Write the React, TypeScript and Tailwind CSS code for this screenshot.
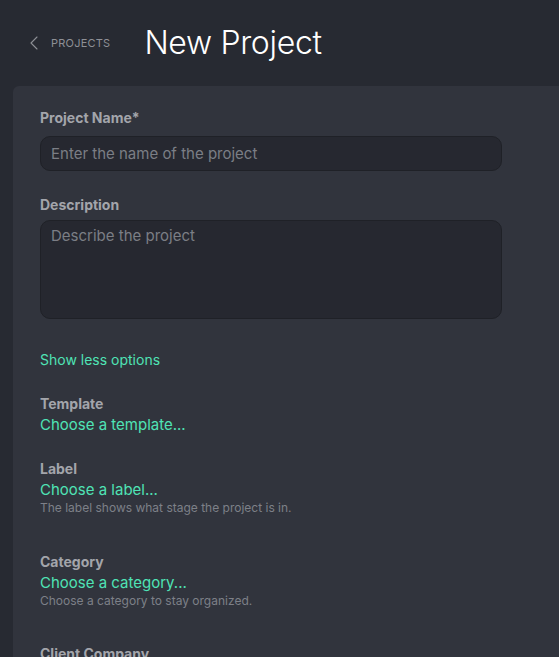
import { ChevronLeft } from "lucide-react";

function Field({
  label,
  action,
  hint,
}: {
  label: string;
  action: string;
  hint?: string;
}) {
  return (
    <div>
      <p className="text-[14px] font-bold leading-5 text-[#a3a5ab]">{label}</p>
      <p className="mt-[1px] text-[15px] leading-5 text-[#4fe3b5]">{action}</p>
      {hint && (
        <p className="text-[12px] leading-4 text-[#7d8088]">{hint}</p>
      )}
    </div>
  );
}

export default function App() {
  return (
    <div
      className="h-[657px] w-[559px] overflow-hidden bg-[#272a32]"
      style={{ fontFamily: "Inter, 'Noto Sans', sans-serif" }}
    >
      <header className="flex h-[86px] items-center">
        <a className="ml-[22px] flex items-center gap-[5px] text-[#8e9096]">
          <ChevronLeft size={24} strokeWidth={1.1} />
          <span className="text-[11px] tracking-[0.02em]">PROJECTS</span>
        </a>
        <h1 className="ml-[34px] text-[32px] font-light tracking-[-0.01em] text-white">
          New Project
        </h1>
      </header>

      <main className="ml-[13px] w-[560px] rounded-tl-[6px] bg-[#31343d] pl-[27px] pt-[22px] pb-10">
        <div className="w-[462px]">
          <label className="block text-[14px] font-bold leading-5 text-[#a3a5ab]">
            Project Name*
          </label>
          <input
            className="mt-[8px] h-[35px] w-full rounded-[10px] border border-[#1f2127] bg-[#262830] px-[10px] text-[15px] text-white outline-none placeholder:text-[#7b7e85]"
            placeholder="Enter the name of the project"
          />

          <label className="mt-[24px] block text-[14px] font-bold leading-5 text-[#a3a5ab]">
            Description
          </label>
          <textarea
            className="mt-[5px] block h-[99px] w-full resize-none rounded-[10px] border border-[#1f2127] bg-[#262830] px-[10px] py-[4px] text-[15px] text-white outline-none placeholder:text-[#7b7e85]"
            placeholder="Describe the project"
          />
        </div>

        <p className="mt-[31px] text-[14px] leading-5 text-[#4fe3b5]">
          Show less options
        </p>

        <div className="mt-[24px] flex flex-col gap-[24px]">
          <Field label="Template" action="Choose a template..." />
          <Field
            label="Label"
            action="Choose a label..."
            hint="The label shows what stage the project is in."
          />
          <div className="pt-[12px]">
            <Field
              label="Category"
              action="Choose a category..."
              hint="Choose a category to stay organized."
            />
          </div>
          <div className="pt-[11px]">
            <Field label="Client Company" action="Choose a company..." />
          </div>
        </div>
      </main>
    </div>
  );
}
